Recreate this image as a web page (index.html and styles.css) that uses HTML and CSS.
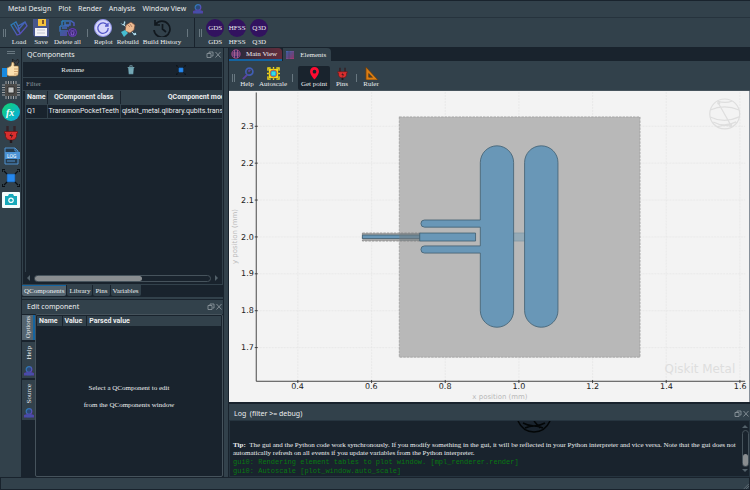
FILE: index.html
```html
<!DOCTYPE html>
<html lang="en">
<head>
<meta charset="utf-8">
<title>Metal Design</title>
<link rel="stylesheet" href="styles.css">
</head>
<body>
<svg class="defs" aria-hidden="true">
  <defs>
    <linearGradient id="cool" x1="0" y1="0" x2="1" y2="1"><stop offset="0" stop-color="#2384b4"/><stop offset="1" stop-color="#6c3cc0"/></linearGradient>
    <linearGradient id="warm" x1="0" y1="0" x2="1" y2="1"><stop offset="0" stop-color="#3b68b0"/><stop offset="1" stop-color="#a8346a"/></linearGradient>
    <linearGradient id="fxg" x1="0" y1="0" x2="1" y2="1"><stop offset="0" stop-color="#12d66c"/><stop offset="1" stop-color="#08a8ea"/></linearGradient>
    <symbol id="person" viewBox="0 0 10 10"><circle cx="5" cy="3.500" r="2.800" fill="#2a4a78" stroke="url(#cool)" stroke-width="1.200"/><path d="M0 9.500V7l3-1h4l3 1v2.500z" fill="#5540a8"/><path d="M2 7v2M4 6.500v3M6 6.500v3M8 7v2" fill="none" stroke="#2b6fae" stroke-width=".7"/></symbol>
    <symbol id="plug" viewBox="0 0 18 18"><path d="M5.500 1v6M12.500 1v6" stroke="#34242a" stroke-width="2.400"/><path d="M2.500 6.500h13v2h-1v3q-1 3.500-4 3.500H7.500q-3 0-4-3.500v-3h-1z" fill="#d82e2e" stroke="#6b1717" stroke-width=".8"/><path d="M9.800 7.500L7.500 11h2l-.8 2.800 2.500-3.500H9z" fill="#241518"/><path d="M9 15v3" stroke="#24181c" stroke-width="2.400"/></symbol>
    <symbol id="nodes" viewBox="0 0 18 18"><path d="M2 2l4 4M16 2l-4 4M2 16l4-4M16 16l-4-4" stroke="#0b1014" stroke-width="1.200"/><path d="M0 3V0h3M15 0h3v3M0 15v3h3M15 18h3v-3" fill="none" stroke="#0b1014" stroke-width="1.800"/><path d="M5 5h8v8H5z" fill="#2688ee" stroke="#17518f" stroke-width=".6"/></symbol>
    <symbol id="float" viewBox="0 0 16 8"><path d="M3 2.500V1h4v4H5.500M1 2.500h4v4H1zM9.500 1l5 5.500M14.500 1l-5 5.500" fill="none" stroke="#89939a" stroke-width=".9"/></symbol>
  </defs>
</svg>

<nav class="menubar">
  <button>Metal Design</button><button>Plot</button><button>Render</button><button>Analysis</button><button>Window View</button>
  <button class="menu-icon" aria-label="Account"><svg viewBox="0 0 10 10"><use href="#person"/></svg></button>
</nav>

<header class="toolbar">
  <span class="grip"></span>
  <button><svg viewBox="0 0 18 18"><path d="M1 6l5-3 2 4 7-4 2 4-7 8-3 1zM1 6l6 10M8 7l2 8M4 5l5 8M15 3l-6 7" fill="none" stroke="url(#cool)" stroke-width="1.300"/></svg>Load</button>
  <button><svg viewBox="0 0 18 18"><path d="M1 0h16v18H3l-2-2z" fill="#47568c"/><path d="M6 0h8v7H6z" fill="#f5c33d"/><path d="M10 1h2v4h-2z" fill="#7c5530"/><path d="M3 9h12v8H3z" fill="#f3f3f6"/><path d="M5 11h8M5 14h8" stroke="#c1c4d1" stroke-width="1"/></svg>Save</button>
  <button><svg viewBox="0 0 18 18"><path d="M3 2h9l3 2v3M3 2v4M1 7h9M1 7v5h8M3 9h5M1 14h7M1 16h7M6 3v3h5V3" fill="none" stroke="url(#cool)" stroke-width="1.500"/><circle cx="13.500" cy="13.500" r="4" fill="#392971" stroke="#6c3cc0"/><path d="M11.500 12h4M12 13l.4 3h2.200l.4-3" fill="none" stroke="#9a6ae4" stroke-width=".8"/></svg>Delete all</button>
  <span class="sep"></span>
  <button><svg viewBox="0 0 18 18"><circle cx="9" cy="9" r="8.500" fill="#d6d6fb" stroke="#8f92ea"/><path d="M13.500 6.500A5.200 5.200 0 1 0 14.200 9M14 4v3h-3" fill="none" stroke="#5356c8" stroke-width="1.300"/></svg>Replot</button>
  <button><svg viewBox="0 0 18 18"><path d="M1 3l3 2 1-4q3 2 1 5l9 8 2-1 1 3-3 1-2-3L5 7Q2 7 1 3z" fill="#b1dcec" stroke="#20323d" stroke-width=".8"/><path d="M7 6l5-3 4 3-1 5-4 3-5-2z" fill="#edbb91" stroke="#70483a" stroke-width=".7"/><path d="M9 6l2 2M11 5l2 3" stroke="#9a6650" stroke-width=".7"/><path d="M2 13l4-2 3 3-4 4z" fill="#46bdd0"/></svg>Rebuild</button>
  <button><svg viewBox="0 0 18 18"><path d="M2.500 5.500A8 8 0 1 1 1 11M2 1v5h5M9.500 5v5l3.500 3" fill="none" stroke="#11181e" stroke-width="1.700"/></svg>Build History</button>
  <span class="sep"></span>
  <span class="bar-end"></span>
  <span class="grip"></span>
  <button><span class="disc">GDS</span>GDS</button>
  <button><span class="disc">HFSS</span>HFSS</button>
  <button><span class="disc">Q3D</span>Q3D</button>
</header>

<main>
  <aside class="rail">
    <span class="rail-grip"></span>
    <button aria-label="Recommended settings"><svg viewBox="0 0 18 18"><path d="M13 7V4L10.500 3V0l2 2h2l1-2q3 3-.5 5v3" fill="#3a3d42" stroke="#15191d" stroke-width=".7"/><path d="M5 9l4-2 1-4q3 0 2 4h4q1 1 0 9l-2 1H7l-2-1z" fill="#fadfae" stroke="#946c3b" stroke-width=".6"/><path d="M0 9h5v9H0z" fill="#1789df"/><path d="M12 10h4M12 12.500h4M12 15h3" stroke="#c69660" stroke-width=".8"/></svg></button>
    <button aria-label="Chip"><svg viewBox="0 0 18 18"><path d="M4 0v18M6.500 0v18M9 0v18M11.500 0v18M14 0v18M0 4h18M0 6.500h18M0 9h18M0 11.500h18M0 14h18" stroke="#a2a4a5"/><path d="M3 3h12v12H3z" fill="#4c4b49"/><path d="M6 6h6v6H6z" fill="#c5c7c6" stroke="#222" stroke-width=".8"/></svg></button>
    <button aria-label="Variables"><svg viewBox="0 0 18 18"><circle cx="9" cy="9" r="9" fill="url(#fxg)"/><text x="4" y="12.500" class="fx">fx</text></svg></button>
    <button aria-label="Pins"><svg viewBox="0 0 18 18"><use href="#plug"/></svg></button>
    <button aria-label="Log"><svg viewBox="0 0 18 18"><path d="M3 1h10l3 3v13H3z" fill="#263b4d" stroke="#4f92cf"/><path d="M13 1v3h3M5 14h8" fill="none" stroke="#4f92cf"/><path d="M3 5h15v7H3z" fill="#4b92d4"/><text x="5" y="10.500" class="logtext">LOG</text></svg></button>
    <button aria-label="Autoscale"><svg viewBox="0 0 18 18"><use href="#nodes"/></svg></button>
    <button aria-label="Screenshot"><svg viewBox="0 0 18 18"><rect y="1" width="18" height="16" rx="1" fill="#f3fbfc"/><path d="M3 5h3l1-2h4l1 2h3v9H3z" fill="#16a8ba"/><circle cx="9" cy="9.300" r="2.800" fill="#f3fbfc"/><circle cx="9" cy="9.300" r="1.500" fill="#16a8ba"/></svg></button>
  </aside>

  <div class="left">
    <section class="dock components">
      <h2>QComponents<svg viewBox="0 0 16 8"><use href="#float"/></svg></h2>
      <div class="actions">
        <button>Rename</button>
        <button aria-label="Delete"><svg viewBox="0 0 10 12"><path d="M1 3h8M3.500 2V1h3v1" stroke="#8dbac4" fill="none"/><path d="M1.500 3h7l-.8 8h-5.400z" fill="#659aaa"/><path d="M3.500 4v6M5 4v6M6.500 4v6" stroke="#94c2cb" stroke-width=".6"/></svg></button>
        <button aria-label="Zoom to component"><svg viewBox="0 0 18 18"><use href="#nodes"/></svg></button>
      </div>
      <input class="filter" type="text" placeholder="Filter" aria-label="Filter">
      <div class="table-wrap">
        <table>
          <thead><tr><th>Name</th><th>QComponent class</th><th>QComponent module</th></tr></thead>
          <tbody><tr><td>Q1</td><td>TransmonPocketTeeth</td><td>qiskit_metal.qlibrary.qubits.transmon_pocket_teeth</td></tr></tbody>
        </table>
      </div>
      <div class="hscroll"><i class="arrow-left"></i><span class="track"><span class="thumb"></span></span><i class="arrow-right"></i></div>
    </section>
    <div class="tabs"><button class="on">QComponents</button><button>Library</button><button>Pins</button><button>Variables</button></div>
    <section class="dock edit">
      <h2>Edit component<svg viewBox="0 0 16 8"><use href="#float"/></svg></h2>
      <div class="edit-body">
        <div class="vtabs">
          <button class="on"><span>Options</span></button>
          <button><span>Help</span><svg viewBox="0 0 10 10"><use href="#person"/></svg></button>
          <button><span>Source</span><svg viewBox="0 0 10 10"><use href="#person"/></svg></button>
        </div>
        <div class="edit-pane">
          <div class="edit-head"><b>Name</b><b>Value</b><b>Parsed value</b></div>
          <p>Select a QComponent to edit<br>from the QComponents window</p>
        </div>
      </div>
    </section>
  </div>

  <div class="right">
    <div class="view-tabs">
      <button class="on"><svg viewBox="0 0 10 10"><circle cx="5" cy="5" r="4.300" fill="#392c65" stroke="#a34784" stroke-width=".8"/><path d="M1 4h8M1 6h8M3.500 1v8M6.500 1v8" stroke="#c46b9d" stroke-width=".7"/></svg>Main View</button>
      <button><svg viewBox="0 0 10 10"><path d="M1 1h8v8H1z" fill="url(#warm)"/><path d="M1 3h8M1 5h8M1 7h8M4 1v8" stroke="#343f65" stroke-width=".5"/></svg>Elements</button>
    </div>
    <div class="plotbar">
      <span class="grip"></span>
      <button><svg viewBox="0 0 14 14"><circle cx="9" cy="5" r="3.800" fill="none" stroke="#405eb5" stroke-width="1.800"/><path d="M7 8l-5 5M8 5l2-2" stroke="#5b43a3" stroke-width="2"/></svg>Help</button>
      <button><svg viewBox="0 0 14 14"><path d="M2 2h10v10H2z" fill="#f3df13"/><path d="M7 0v2M7 12v2M0 7h2M12 7h2M1 4V1h3M10 1h3v3M1 10v3h3M10 13h3v-3" stroke="#f3d719" stroke-width="1.500" fill="none"/><circle cx="7" cy="7" r="3.700" fill="#13a5d0" stroke="#d9553e"/><path d="M5 5h4v4H5z" fill="#39dae5"/></svg>Autoscale</button>
      <span class="sep"></span>
      <button class="checked"><svg viewBox="0 0 14 14"><path fill-rule="evenodd" d="M7 0a4.800 4.800 0 0 1 4.800 4.800C11.800 8.500 7 13.500 7 13.500S2.200 8.500 2.200 4.800A4.800 4.800 0 0 1 7 0zm0 3a2 2 0 1 0 0 4 2 2 0 0 0 0-4z" fill="#ff0b31"/></svg>Get point</button>
      <button><svg viewBox="0 0 18 18"><use href="#plug"/></svg>Pins</button>
      <span class="sep"></span>
      <button><svg viewBox="0 0 14 14"><path fill-rule="evenodd" d="M1 0v14h13zM4 7v4h4z" fill="#db7d12" stroke="#623c11" stroke-width=".8"/></svg>Ruler</button>
    </div>
    <div class="plot">
      <svg viewBox="229 91 520 312" role="img" aria-label="Layout plot of component Q1">
        <path class="gridline" d="M297.200 92v290M371.200 92v290M445.100 92v290M519 92v290M592.900 92v290M666.800 92v290M740.700 92v290M256 126.400h490M256 163.400h490M256 200.400h490M256 237.400h490M256 274.400h490M256 311.400h490M256 348.400h490"/>
        <path class="pocket" d="M399 117h241.500v241H399z"/>
        <path class="gap" d="M362 233.500h58v8h-58z"/>
        <path class="metal" d="M362 235.500h57.500v3.500H362z"/>
        <path class="shade" d="M399 233.500h21v8h-21z"/>
        <path class="metal" d="M419.500 233.500h56v8h-56z"/>
        <path class="junction" d="M513.700 233.500h11.500v8h-11.500z"/>
        <path class="metal" d="M480.300 162.700a16.700 16.700 0 0 1 33.400 0v148.600a16.700 16.700 0 0 1-33.400 0V253.600h-56a3.600 3.600 0 0 1 0-7.200h56V227.600h-56a3.600 3.600 0 0 1 0-7.200h56z"/>
        <rect class="metal" x="524.700" y="146" width="33.500" height="182" rx="16.700"/>
        <path class="axis" d="M255.500 92.500v289.700H746M254 126.400h3M254 163.400h3M254 200.400h3M254 237.400h3M254 274.400h3M254 311.400h3M254 348.400h3M297.200 381v3M371.200 381v3M445.100 381v3M519 381v3M592.900 381v3M666.800 381v3M740.700 381v3"/>
        <g class="tick ty"><text x="253" y="129">2.3</text><text x="253" y="166">2.2</text><text x="253" y="203">2.1</text><text x="253" y="240">2.0</text><text x="253" y="277">1.9</text><text x="253" y="314">1.8</text><text x="253" y="351">1.7</text></g>
        <g class="tick tx"><text x="297" y="390">0.4</text><text x="371" y="390">0.6</text><text x="445" y="390">0.8</text><text x="519" y="390">1.0</text><text x="593" y="390">1.2</text><text x="667" y="390">1.4</text><text x="741" y="390">1.6</text></g>
        <text class="label" x="500" y="400">x position (mm)</text>
        <text class="label" transform="translate(236 237) rotate(-90)">y position (mm)</text>
        <text class="mark" x="736" y="374">Qiskit Metal</text>
        <g class="globe"><circle cx="725.500" cy="114" r="15"/><path d="M711 110q14-6 29 0M711 117q14 7 29 0M714 122q11 6 23 0M718 101q8 3 15 0M718 127q8-3 15 0M719 103l13 23"/><circle cx="719.500" cy="103" r="1"/><circle cx="731.500" cy="125" r="1"/></g>
      </svg>
    </div>
    <section class="dock log">
      <h2>Log &nbsp;(filter &gt;= debug)<svg viewBox="0 0 16 8"><use href="#float"/></svg></h2>
      <div class="log-body">
        <div class="log-text">
          <svg class="log-logo" viewBox="0 0 34 12"><path d="M1 0q5 11 16 11T33 0M6 2q11 6 22 0M8 7q9-4 18 0M17 0l6 7" fill="none" stroke="#030607" stroke-width="1.500"/></svg>
          <p><b>Tip:</b> The gui and the Python code work synchronously. If you modify something in the gui, it will be reflected in your Python interpreter and vice versa. Note that the gui does not automatically refresh on all events if you update variables from the Python interpreter.</p>
          <pre>gui0: Rendering element tables to plot window. [mpl_renderer.render]
gui0: Autoscale [plot_window.auto_scale]</pre>
        </div>
        <div class="vscroll"><i class="arrow-up"></i><span class="track"><span class="thumb"></span></span><i class="arrow-down"></i></div>
      </div>
    </section>
  </div>
</main>
<footer><svg viewBox="0 0 8 8"><path d="M1 8l7-7M4 8l4-4" stroke="#7a858d" stroke-width=".8"/></svg></footer>
</body>
</html>
```

FILE: styles.css
```css
* { box-sizing: border-box; }
:root { --panel: #32414b; --dark: #19232d; --line: #46535c; --text: #eceeef; --serif: "Liberation Serif", serif; --sans: Roboto, "Noto Sans", sans-serif; }
body { margin: 0; height: 100vh; display: flex; flex-direction: column; background: var(--panel); color: var(--text); font: 7px/10px var(--sans); overflow: hidden; }
button { border: 0; margin: 0; padding: 0; background: none; color: inherit; font: inherit; white-space: nowrap; }
.defs { position: absolute; width: 0; height: 0; }
svg { display: block; }
h2 { margin: 0; font-size: 7px; font-weight: 400; }

.menubar { display: flex; align-items: center; height: 18px; padding-left: 8px; gap: 8px; border-top: 1px solid var(--dark); border-bottom: 1px solid #26333d; font-family: "Noto Sans", sans-serif; }
.menubar { gap: 7px; }
.menu-icon svg { width: 10px; height: 10px; }

.toolbar { display: flex; align-items: center; height: 30px; padding-left: 3px; gap: 4px; border-bottom: 1px solid var(--dark); }
.toolbar button, .plotbar button { display: flex; flex-direction: column; align-items: center; font: 7px/9px var(--serif); min-width: 18px; }
.toolbar button { gap: 1px; }
.toolbar svg { width: 18px; height: 18px; }
.grip { width: 3px; height: 8px; border: solid #687780; border-width: 0 1px; }
.sep { width: 1px; height: 8px; margin: 0 2px; background: #687780; }
.bar-end { width: 1px; align-self: stretch; background: var(--dark); }
.disc { width: 18px; height: 18px; border-radius: 50%; background: #32125f; font: 7px/18px var(--serif); text-align: center; }

main { flex: 1; min-height: 0; display: grid; grid-template-columns: 21px 203px minmax(0, 1fr); }
.rail { display: flex; flex-direction: column; align-items: center; gap: 4px; padding-top: 3px; }
.rail-grip { width: 8px; height: 3px; border: solid #687780; border-width: 1px 0; margin-bottom: 1px; }
.rail svg { width: 18px; height: 18px; }
.fx { font: italic bold 10px var(--serif); fill: #fff; }
.logtext { font: 5px var(--sans); fill: #fff; }

.left { display: flex; flex-direction: column; min-height: 0; border: solid var(--dark); border-width: 0 1px; }
.dock { display: flex; flex-direction: column; min-height: 0; }
.dock h2 { display: flex; align-items: center; justify-content: space-between; height: 14px; padding-left: 5px; flex: none; font-family: "Noto Sans", sans-serif; }
.dock h2 svg { width: 16px; height: 8px; }
.components { flex: 1; background: var(--dark); border: 1px solid var(--panel); border-top: 0; }
.components h2 { background: var(--panel); padding-left: 4px; }
.actions { display: grid; grid-template-columns: 6fr 1fr 5fr; align-items: center; height: 16px; border-bottom: 1px solid var(--panel); font: 7px/10px var(--serif); }
.actions button { justify-self: center; }
.actions svg { width: 10px; height: 10px; }
.filter { width: 100%; height: 13px; padding: 0 3px; border: 0; border-bottom: 1px solid var(--panel); background: var(--dark); color: var(--text); font: 7px/10px var(--serif); }
.filter::placeholder { color: #8a949b; opacity: 1; }
.table-wrap { flex: 1; overflow: hidden; margin-left: 2px; border-left: 1px solid var(--panel); }
table { border-collapse: collapse; white-space: nowrap; }
th, td { height: 14px; padding: 0 1px; border-right: 1px solid var(--panel); border-bottom: 1px solid var(--panel); text-align: left; }
th { height: 13px; background: var(--panel); border-right-color: var(--dark); font-weight: 700; text-align: center; }
.hscroll { display: flex; align-items: center; gap: 4px; height: 12px; padding: 0 4px; }
.track { border: 1px solid var(--line); border-radius: 4px; }
.hscroll .track { flex: 1; height: 7px; }
.thumb { display: block; background: #898d90; border-radius: 3px; }
.hscroll .thumb { width: 61%; height: 5px; }
i { border: 3px solid transparent; width: 0; height: 0; }
.arrow-left { border-left-width: 0; border-right-color: #53616a; }
.arrow-right { border-right-width: 0; border-left-color: #53616a; }
.arrow-up { border-top-width: 0; border-bottom-color: #53616a; }
.arrow-down { border-bottom-width: 0; border-top-color: #53616a; }
.tabs { display: flex; gap: 1px; height: 14px; align-items: flex-start; background: var(--dark); border-bottom: 2px solid var(--panel); }
.tabs button { height: 11px; padding: 0 2px; background: var(--panel); border-radius: 0 0 2px 2px; font: 7px/10px var(--serif); }
.tabs .on { background: #54646f; border-top: 1px solid #1464a0; }
.edit { height: 178px; border-top: 1px solid var(--dark); }
.edit-body { flex: 1; min-height: 0; display: flex; background: var(--dark); }
.vtabs { display: flex; flex-direction: column; gap: 2px; width: 13px; padding-top: 1px; }
.vtabs button { display: flex; flex-direction: column; align-items: center; justify-content: space-between; min-height: 25px; padding: 1px 0; background: var(--panel); font: 7px/10px var(--serif); }
.vtabs button + button { min-height: 36px; padding: 4px 0 2px; }
.vtabs button:last-child { min-height: 40px; }
.vtabs span { writing-mode: vertical-rl; transform: rotate(180deg); }
.vtabs svg { width: 10px; height: 10px; }
.vtabs .on { background: #54646f; border-right: 2px solid #1464a0; }
.edit-pane { flex: 1; display: flex; flex-direction: column; border: 1px solid var(--line); border-radius: 2px; padding: 1px; }
.edit-head { display: flex; background: var(--panel); line-height: 10px; }
.edit-head b { padding: 0 4px 0 2px; border-right: 1px solid var(--dark); font-weight: 700; }
.edit-head b:last-child { border: 0; }
.edit-pane p { margin: auto; padding-bottom: 8px; text-align: center; font: 7px/17px var(--serif); }

.right { display: flex; flex-direction: column; min-width: 0; min-height: 0; margin-left: 4px; border-left: 1px solid var(--dark); }
.view-tabs { display: flex; height: 14px; background: var(--dark); gap: 1px; border-bottom: 1px solid var(--panel); }
.view-tabs button { display: flex; align-items: center; gap: 5px; padding: 0 5px 0 2px; background: var(--panel); border-radius: 0 4px 0 0; font: 7px/10px var(--serif); }
.view-tabs svg { width: 10px; height: 10px; }
.view-tabs .on { background: linear-gradient(90deg, #202a3b, #632c3b); border-bottom: 2px solid #1464a0; }
.plotbar { display: flex; align-items: center; height: 29px; padding: 3px 0 0 3px; gap: 3px; border-bottom: 1px solid var(--line); }
.plotbar svg { width: 13px; height: 13px; }
.plotbar button { padding-top: 1px; height: 24px; min-width: 18px; }
.plotbar .sep { margin: 0 2px; }
.plotbar .checked { width: 32px; background: var(--dark); border-radius: 2px; }
.plot { flex: 1; min-height: 0; background: #f3f3f3; border-right: 1px solid #87909a; }
.plot svg { width: 100%; height: 100%; }
.gridline { fill: none; stroke: #e3e3e3; stroke-width: .6; stroke-dasharray: 2 1; }
.pocket { fill: #b8b8b8; stroke: #9d9d9d; stroke-width: .8; stroke-dasharray: 2.500 1; }
.gap { fill: #a9a9a9; stroke: #848484; stroke-width: .8; stroke-dasharray: 2.500 1; }
.shade { fill: #737b80; opacity: .55; }
.metal { fill: #6997b7; stroke: #405e70; stroke-width: .8; }
.junction { fill: #94aab7; stroke: #839aa8; stroke-width: .8; }
.axis { fill: none; stroke: #333; stroke-width: .9; }
.tick { font: 8px "DejaVu Sans", sans-serif; fill: #222; }
.ty { text-anchor: end; }
.tx { text-anchor: middle; }
.label { font: 7px "DejaVu Sans", sans-serif; fill: #b9b9b9; text-anchor: middle; }
.mark { font: 12px "DejaVu Sans", sans-serif; fill: #dedede; text-anchor: end; }
.globe { fill: none; stroke: #dedede; stroke-width: 1.200; }

.log { height: 75px; border-top: 2px solid var(--dark); }
.log h2 { height: 16px; padding-top: 3px; }
.log-body { flex: 1; min-height: 0; display: flex; background: var(--dark); border: 1px solid #26343f; }
.log-text { flex: 1; min-width: 0; padding-left: 3px; }
.log-logo { width: 34px; height: 12px; margin-left: 56%; }
.log p { margin: 8px 0 0; font: 7px/8px var(--serif); }
.log p b { margin-right: 2px; }
.log pre { margin: 1px 0 0; color: #087911; font: 7px/9px "Liberation Mono", monospace; }
.vscroll { width: 8px; display: flex; flex-direction: column; align-items: center; gap: 2px; padding: 4px 0; }
.vscroll .track { flex: 1; width: 7px; display: flex; align-items: flex-end; }
.vscroll .thumb { width: 5px; height: 12px; }
footer { height: 13px; border: 1px solid var(--dark); display: flex; justify-content: flex-end; align-items: flex-end; }
footer svg { width: 6px; height: 6px; }
```
